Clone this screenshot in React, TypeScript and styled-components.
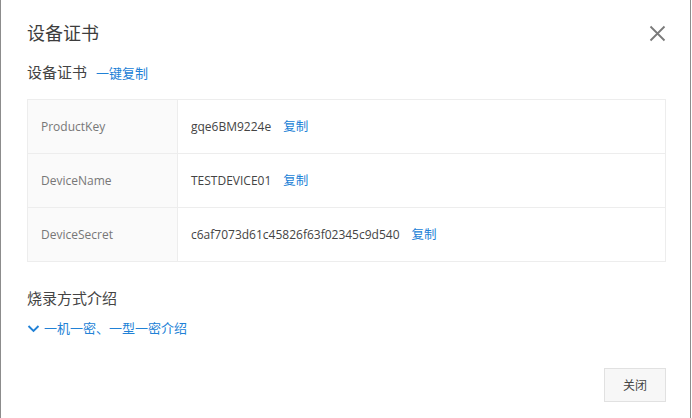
import React, { FC } from 'react';
import styled, { createGlobalStyle } from 'styled-components';

const GlobalStyle = createGlobalStyle`
  html, body {
    margin: 0;
    padding: 0;
    background: #fff;
  }
  body {
    font-family: "Open Sans", "Noto Sans CJK SC", sans-serif;
    color: #333;
  }
`;

interface CertItem {
  label: string;
  value: string;
}

const certItems: CertItem[] = [
  { label: 'ProductKey', value: 'gqe6BM9224e' },
  { label: 'DeviceName', value: 'TESTDEVICE01' },
  { label: 'DeviceSecret', value: 'c6af7073d61c45826f63f02345c9d540' }
];

const Dialog = styled.div`
  box-sizing: border-box;
  width: 691px;
  height: 418px;
  border-left: 1px solid #8c8c8c;
  border-right: 1px solid #8c8c8c;
  padding: 0 24px 16px 26px;
  display: flex;
  flex-direction: column;
`;

const Header = styled.div`
  display: flex;
  align-items: center;
  justify-content: space-between;
  padding-top: 22px;
  height: 22px;
`;

const Title = styled.div`
  font-size: 18px;
  line-height: 22px;
  color: #3d3d3d;
`;

const CloseButton = styled.button`
  display: flex;
  align-items: center;
  justify-content: center;
  width: 18px;
  height: 18px;
  padding: 0;
  border: none;
  background: transparent;
  cursor: pointer;
`;

const SectionHead = styled.div<{ gap: number }>`
  display: flex;
  align-items: center;
  margin-top: ${({ gap }) => gap}px;
  height: 22px;
`;

const SectionTitle = styled.span`
  font-size: 15px;
  line-height: 22px;
  color: #444;
`;

const LinkText = styled.a`
  font-size: 13px;
  line-height: 20px;
  color: #2181d6;
  text-decoration: none;
  cursor: pointer;
`;

const HeadLink = styled(LinkText)`
  margin-left: 9px;
  padding-top: 2px;
`;

const Table = styled.div`
  margin-top: 16px;
  border: 1px solid #ededed;
`;

const Row = styled.div`
  display: flex;
  height: 53px;
  & + & {
    border-top: 1px solid #ededed;
  }
`;

const LabelCell = styled.div`
  box-sizing: border-box;
  width: 150px;
  flex-shrink: 0;
  display: flex;
  align-items: center;
  padding-left: 13px;
  background: #fafafa;
  border-right: 1px solid #ededed;
  font-size: 12px;
  color: #777;
`;

const ValueCell = styled.div`
  display: flex;
  align-items: center;
  padding-left: 13px;
  font-size: 12px;
  color: #444;
`;

const CopyLink = styled(LinkText)`
  margin-left: 12px;
  font-size: 12.5px;
`;

const Expander = styled.div`
  display: flex;
  align-items: center;
  margin-top: 9px;
  height: 20px;
  gap: 4px;
`;

const Footer = styled.div`
  margin-top: auto;
  display: flex;
  justify-content: flex-end;
`;

const Button = styled.button`
  box-sizing: border-box;
  width: 62px;
  height: 34px;
  background: #f7f7f7;
  border: 1px solid #e1e1e1;
  font-family: "Open Sans", "Noto Sans CJK SC", sans-serif;
  font-size: 12px;
  color: #444;
  cursor: pointer;
`;

const CloseIcon = () => (
  <svg width="17" height="17" viewBox="0 0 17 17">
    <path d="M1.5 1.5L15.5 15.5M15.5 1.5L1.5 15.5" stroke="#7a7a7a" strokeWidth="1.8" fill="none" />
  </svg>
);

const Chevron = () => (
  <svg width="13" height="9" viewBox="0 0 13 9">
    <path d="M1.5 2L6.5 7L11.5 2" stroke="#2181d6" strokeWidth="1.9" fill="none" />
  </svg>
);

const App: FC = () => (
  <>
    <GlobalStyle />
    <Dialog>
      <Header>
        <Title>设备证书</Title>
        <CloseButton aria-label="close">
          <CloseIcon />
        </CloseButton>
      </Header>

      <SectionHead gap={17}>
        <SectionTitle>设备证书</SectionTitle>
        <HeadLink>一键复制</HeadLink>
      </SectionHead>

      <Table>
        {certItems.map((item) => (
          <Row key={item.label}>
            <LabelCell>{item.label}</LabelCell>
            <ValueCell>
              {item.value}
              <CopyLink>复制</CopyLink>
            </ValueCell>
          </Row>
        ))}
      </Table>

      <SectionHead gap={25}>
        <SectionTitle>烧录方式介绍</SectionTitle>
      </SectionHead>
      <Expander>
        <Chevron />
        <LinkText>一机一密、一型一密介绍</LinkText>
      </Expander>

      <Footer>
        <Button>关闭</Button>
      </Footer>
    </Dialog>
  </>
);

export default App;
